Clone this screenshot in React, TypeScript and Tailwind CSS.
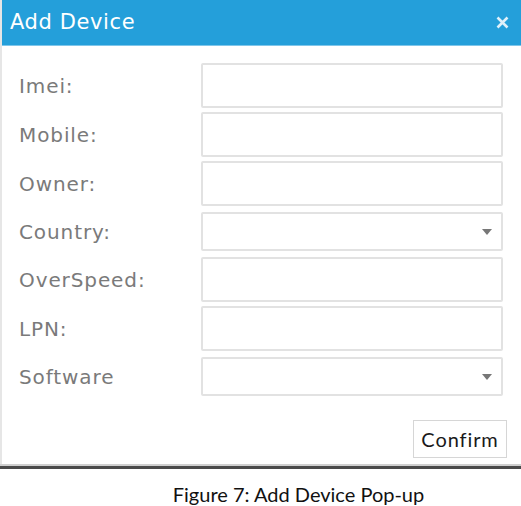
const fields = [
  { label: "Imei:", kind: "input" },
  { label: "Mobile:", kind: "input" },
  { label: "Owner:", kind: "input" },
  { label: "Country:", kind: "select" },
  { label: "OverSpeed:", kind: "input" },
  { label: "LPN:", kind: "input" },
  { label: "Software", kind: "select" },
];

function Caret() {
  return (
    <svg width="10" height="6" viewBox="0 0 10 6" className="shrink-0">
      <path d="M0 0 L10 0 L5 6 Z" fill="#777" />
    </svg>
  );
}

export default function App() {
  return (
    <div className="w-[521px] h-[506px] bg-white overflow-hidden">
      <div className="border-l-2 border-[#e6e6e6]">
        <div className="h-[46px] bg-[#249fda] border-b border-[#7fc6ea] flex items-center justify-between pl-[8px] pr-[12px]">
          <span className="text-white text-[21px] font-['DejaVu_Sans',sans-serif] tracking-[0.6px]">
            Add Device
          </span>
          <svg width="13" height="13" viewBox="0 0 13 13">
            <path d="M1.5 1.5 L11.5 11.5 M11.5 1.5 L1.5 11.5" stroke="#dff0fa" strokeWidth="2.6" />
          </svg>
        </div>

        <div className="pt-[17px] flex flex-col gap-[4px] font-['DejaVu_Sans',sans-serif]">
          {fields.map((f) => (
            <div key={f.label} className="flex items-center">
              <label className="w-[199px] pl-[17px] text-[20px] text-[#7a7a7a] tracking-[0.9px]">
                {f.label}
              </label>
              {f.kind === "input" ? (
                <div className="w-[302px] h-[45px] border-2 border-[#e2e2e2] rounded-[2px] bg-white" />
              ) : (
                <div className="w-[302px] h-[39px] my-[2px] border-2 border-[#e2e2e2] rounded-[2px] bg-white flex items-center justify-end pr-[9px]">
                  <Caret />
                </div>
              )}
            </div>
          ))}
        </div>

        <div className="flex justify-end pr-[14px] pt-[22px] pb-[6px]">
          <button className="w-[94px] h-[38px] border border-[#d6d6d6] bg-white text-[20px] text-[#1a1a1a] font-['Lato',sans-serif] tracking-[0.9px]">
            Confirm
          </button>
        </div>
      </div>
      <div className="h-[2px] bg-[#cfcfcf]" />
      <div className="h-[3px] bg-[#4a4a4a]" />
      <div className="text-center pl-[76px] pt-[12px] text-[20px] leading-[26px] text-[#111] font-['Lato',sans-serif]">
        Figure 7: Add Device Pop-up
      </div>
    </div>
  );
}
